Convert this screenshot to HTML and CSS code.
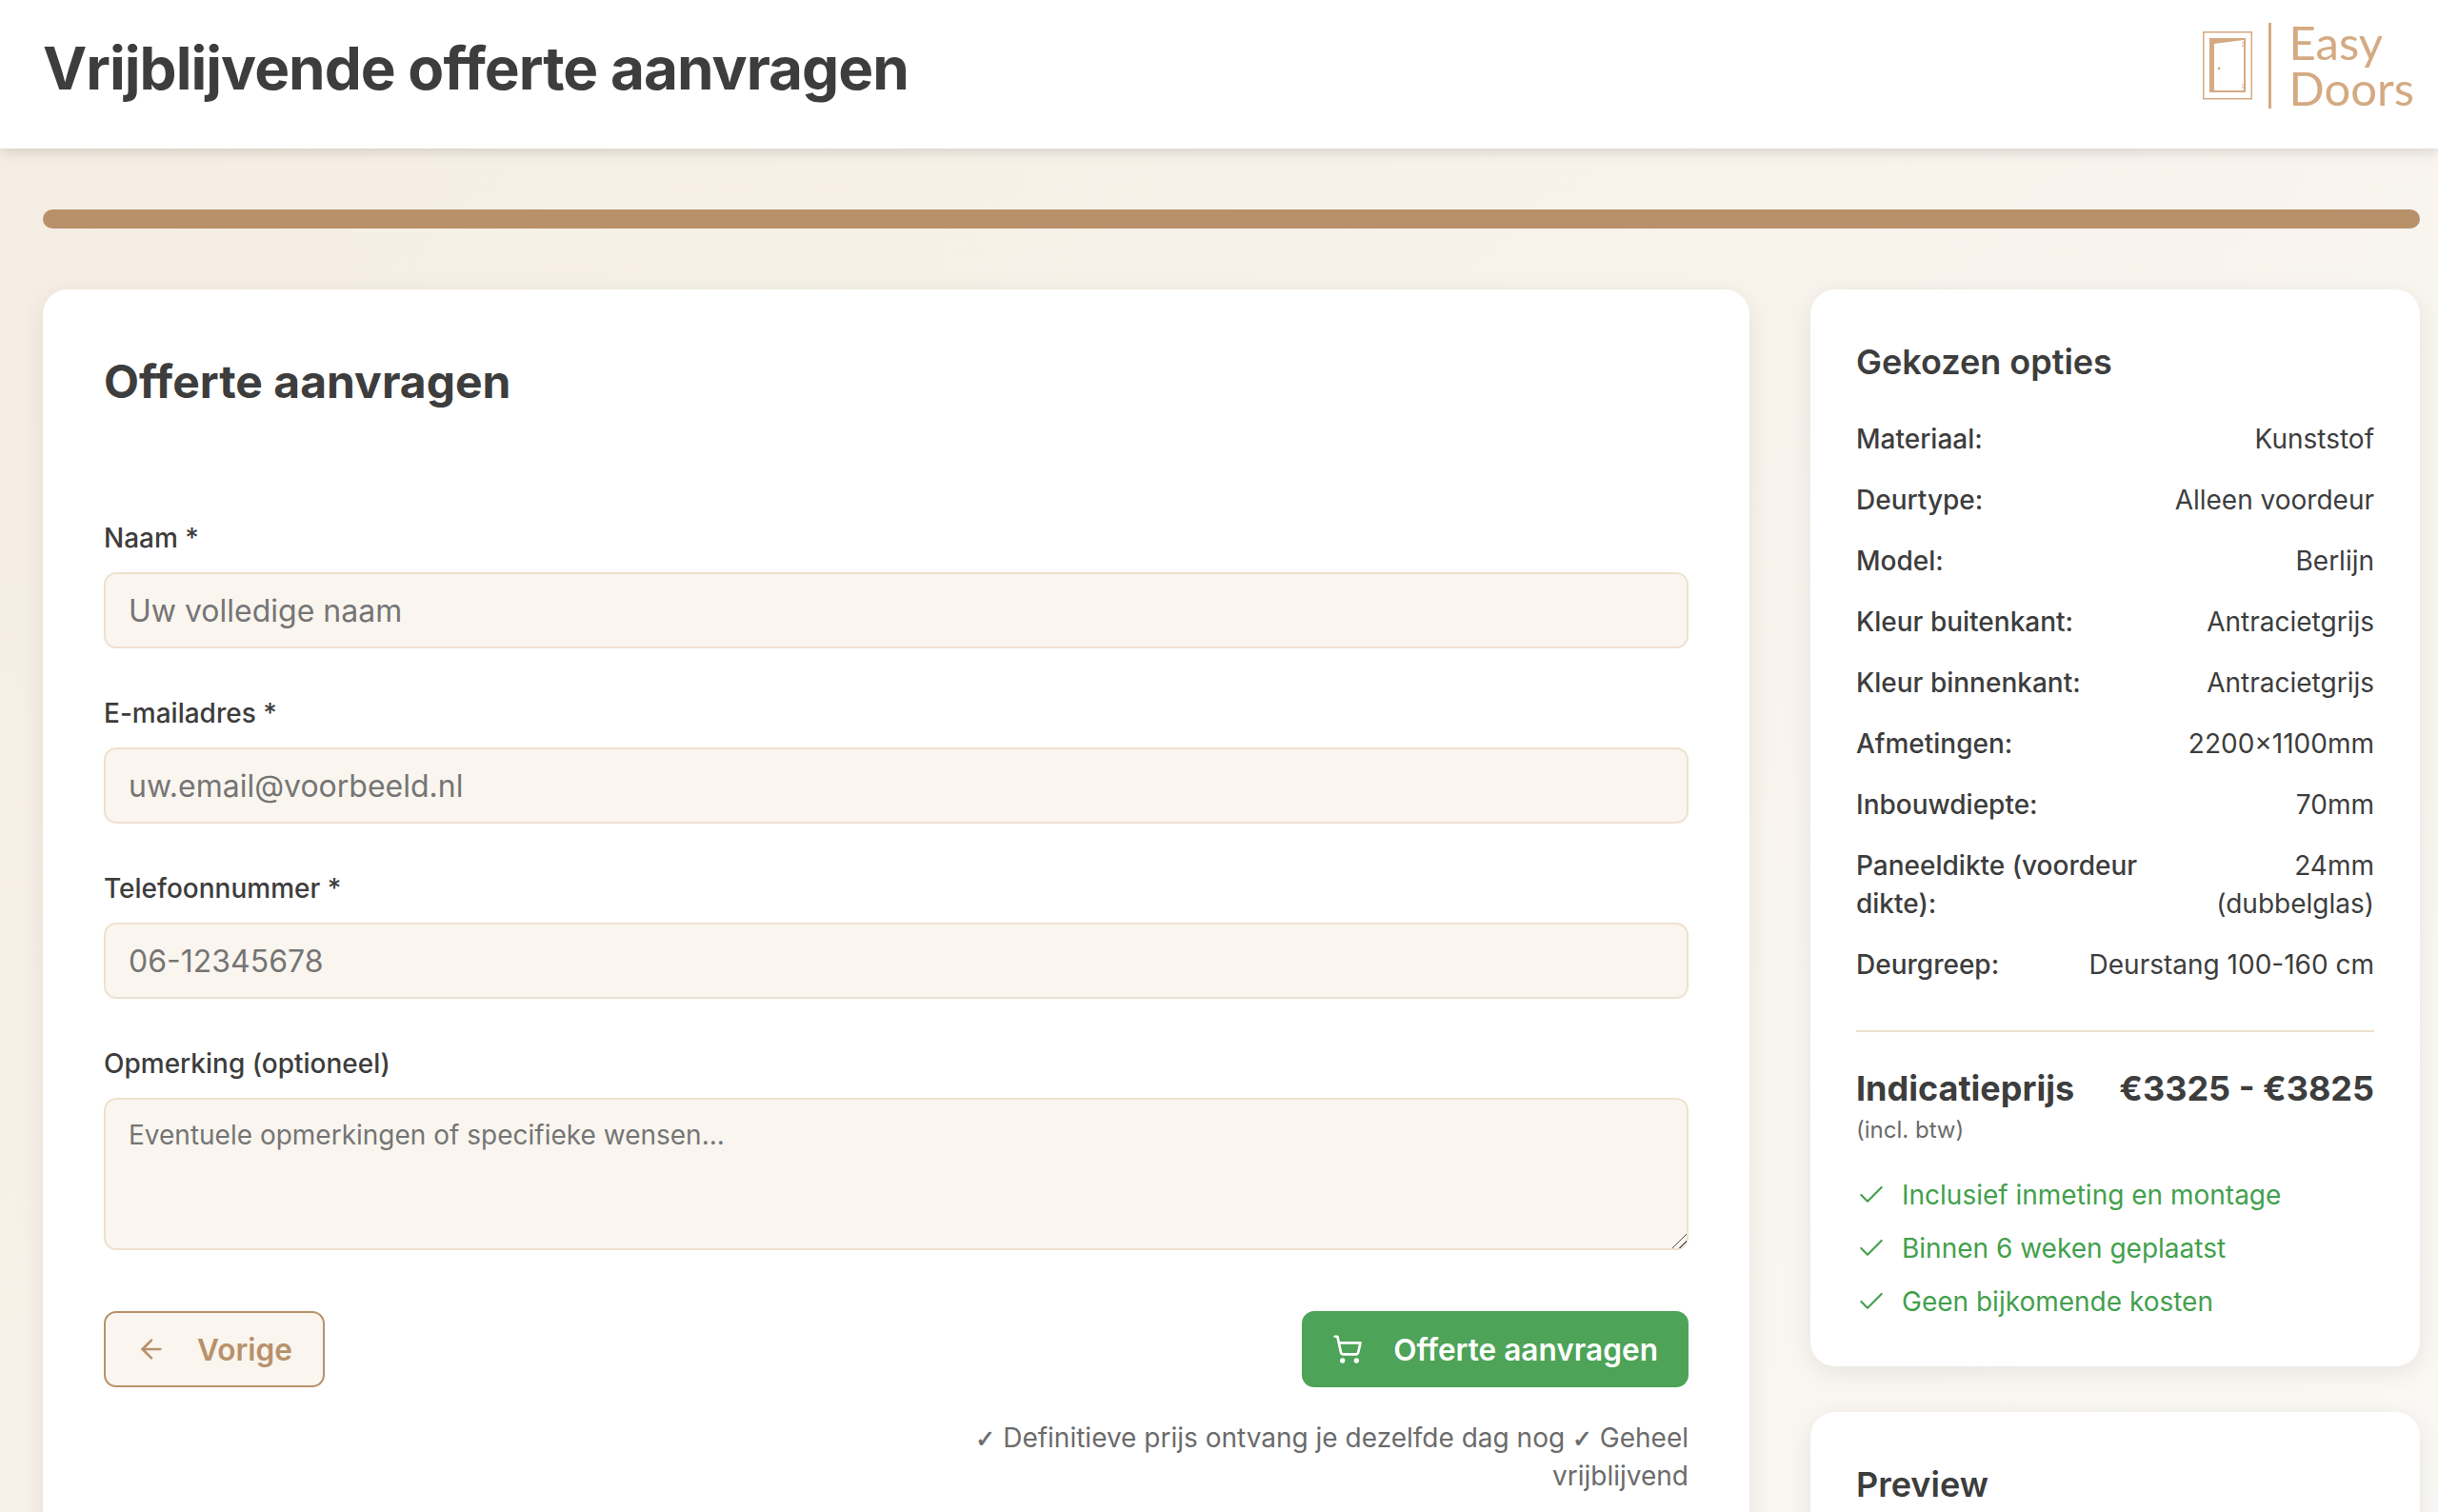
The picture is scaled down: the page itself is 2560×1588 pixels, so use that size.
FILE: index.html
```html
<!DOCTYPE html>
<html lang="nl">
<head>
<meta charset="utf-8">
<title>Vrijblijvende offerte aanvragen</title>
<link rel="stylesheet" href="styles.css">
</head>
<body>
<header class="topbar">
  <h1 class="page-title">Vrijblijvende offerte aanvragen</h1>
  <div class="logo">
    <svg class="logo-door" viewBox="0 0 52 72" aria-hidden="true">
      <rect x="0.75" y="0.75" width="50.5" height="70" fill="none" stroke="#d4aa82" stroke-width="1.5"/>
      <path d="M7 7H45V64H7Z M12 13V62H43V9Z" fill="#d4aa82" fill-rule="evenodd"/>
      <circle cx="17" cy="39" r="1.4" fill="#d4aa82"/>
      <path d="M41 12h2M41 15h2M41 56h2M41 59h2" stroke="#d4aa82" stroke-width="1"/>
    </svg>
    <span class="logo-rule"></span>
    <span class="logo-text">Easy<br>Doors</span>
  </div>
</header>
<main class="page">
  <div class="progress"></div>
  <div class="columns">
    <section class="card form-card">
      <h2 class="form-title">Offerte aanvragen</h2>
      <form class="form">
        <div class="field">
          <label class="field-label">Naam *</label>
          <input class="control" type="text" placeholder="Uw volledige naam">
        </div>
        <div class="field">
          <label class="field-label">E-mailadres *</label>
          <input class="control" type="email" placeholder="uw.email@voorbeeld.nl">
        </div>
        <div class="field">
          <label class="field-label">Telefoonnummer *</label>
          <input class="control" type="tel" placeholder="06-12345678">
        </div>
        <div class="field">
          <label class="field-label">Opmerking (optioneel)</label>
          <textarea class="control area" rows="3" placeholder="Eventuele opmerkingen of specifieke wensen..."></textarea>
        </div>
        <div class="actions">
          <button type="button" class="btn btn-back">
            <svg class="btn-icon" viewBox="0 0 24 24" fill="none" stroke="currentColor" stroke-width="2" stroke-linecap="round" stroke-linejoin="round"><path d="m12 19-7-7 7-7"/><path d="M19 12H5"/></svg>
            Vorige
          </button>
          <button type="button" class="btn btn-submit">
            <svg class="btn-icon" viewBox="0 0 24 24" fill="none" stroke="currentColor" stroke-width="2" stroke-linecap="round" stroke-linejoin="round"><circle cx="8" cy="21" r="1"/><circle cx="19" cy="21" r="1"/><path d="M2.05 2.05h2l2.66 12.42a2 2 0 0 0 2 1.58h9.78a2 2 0 0 0 1.95-1.57l1.65-7.43H5.12"/></svg>
            Offerte aanvragen
          </button>
        </div>
        <p class="note"><span class="tick">✓</span> Definitieve prijs ontvang je dezelfde dag nog <span class="tick">✓</span> Geheel vrijblijvend</p>
      </form>
    </section>
    <aside class="sidebar">
      <section class="card side-card">
        <h3 class="side-title">Gekozen opties</h3>
        <dl class="options">
          <div class="option"><dt>Materiaal:</dt><dd>Kunststof</dd></div>
          <div class="option"><dt>Deurtype:</dt><dd>Alleen voordeur</dd></div>
          <div class="option"><dt>Model:</dt><dd>Berlijn</dd></div>
          <div class="option"><dt>Kleur buitenkant:</dt><dd>Antracietgrijs</dd></div>
          <div class="option"><dt>Kleur binnenkant:</dt><dd>Antracietgrijs</dd></div>
          <div class="option"><dt>Afmetingen:</dt><dd>2200×1100mm</dd></div>
          <div class="option"><dt>Inbouwdiepte:</dt><dd>70mm</dd></div>
          <div class="option"><dt>Paneeldikte (voordeur dikte):</dt><dd>24mm (dubbelglas)</dd></div>
          <div class="option"><dt>Deurgreep:</dt><dd>Deurstang 100-160 cm</dd></div>
        </dl>
        <div class="price-block">
          <div class="price-row"><span>Indicatieprijs</span><span>€3325 - €3825</span></div>
          <div class="price-sub">(incl. btw)</div>
          <ul class="perks">
            <li class="perk"><svg class="perk-icon" viewBox="0 0 24 24" fill="none" stroke="currentColor" stroke-linecap="round" stroke-linejoin="round"><path d="M20 6 9 17l-5-5"/></svg>Inclusief inmeting en montage</li>
            <li class="perk"><svg class="perk-icon" viewBox="0 0 24 24" fill="none" stroke="currentColor" stroke-linecap="round" stroke-linejoin="round"><path d="M20 6 9 17l-5-5"/></svg>Binnen 6 weken geplaatst</li>
            <li class="perk"><svg class="perk-icon" viewBox="0 0 24 24" fill="none" stroke="currentColor" stroke-linecap="round" stroke-linejoin="round"><path d="M20 6 9 17l-5-5"/></svg>Geen bijkomende kosten</li>
          </ul>
        </div>
      </section>
      <section class="card side-card preview-card">
        <h3 class="side-title">Preview</h3>
      </section>
    </aside>
  </div>
</main>
</body>
</html>
```
FILE: styles.css
```css
* { box-sizing: border-box; }
html, body { margin: 0; height: 1588px; overflow: hidden; }
body {
  font-family: Inter, "Noto Sans", sans-serif;
  color: #3d3d3d;
  background: linear-gradient(135deg, #f5ede2 0%, #faf8f4 100%);
  font-size: 28px;
}
.topbar {
  position: relative;
  height: 156px;
  background: #fff;
  box-shadow: 0 3px 13px rgba(0, 0, 0, 0.14);
  display: flex;
  align-items: center;
  justify-content: space-between;
  padding: 0 25px 12px 45px;
}
.page-title { margin: 0; font-size: 62px; font-weight: 700; line-height: 1.1; letter-spacing: -1px; }
.logo { display: flex; align-items: center; color: #d4aa82; margin-top: -6px; }
.logo-door { width: 52px; height: 72px; }
.logo-rule { width: 3px; height: 90px; background: #d4aa82; margin: 0 19px 0 17px; }
.logo-text { font-family: Lato, sans-serif; font-weight: 400; font-size: 49px; line-height: 48px; margin-top: -3px; }
.page { padding: 64px 19px 0 45px; }
.progress { height: 20px; border-radius: 10px; background: #b8916b; }
.columns { display: flex; gap: 64px; margin-top: 64px; align-items: flex-start; }
.card { background: #fff; border-radius: 26px; box-shadow: 0 6px 26px rgba(0, 0, 0, 0.08); }
.form-card { width: 1792px; padding: 64px 64px 100px; }
.form-title { margin: 0 0 111px; font-size: 48px; font-weight: 700; line-height: 66px; }
.field { margin-bottom: 48px; }
.field-label { display: block; font-size: 28px; font-weight: 500; line-height: 40px; margin-bottom: 16px; }
.control {
  display: block;
  width: 100%;
  height: 80px;
  padding: 0 24px;
  border: 2px solid #efe0cf;
  border-radius: 13px;
  background: #faf5ef;
  font-family: inherit;
  font-size: 32px;
  color: #3d3d3d;
  outline: none;
}
.area { height: 160px; padding: 20px 24px; font-size: 28px; resize: vertical; }
.area::-webkit-resizer {
  background:
    linear-gradient(135deg, transparent 73%, #666 73%, #666 79%, transparent 79%),
    linear-gradient(135deg, transparent 47%, #555 47%, #555 53%, transparent 53%);
}
.actions { display: flex; justify-content: space-between; margin-top: 64px; }
.btn {
  display: flex;
  align-items: center;
  gap: 32px;
  height: 80px;
  padding: 0 32px;
  border-radius: 13px;
  font-family: inherit;
  font-size: 31.6px;
  font-weight: 600;
}
.btn-icon { width: 32px; height: 32px; flex: none; }
.btn-back { border: 2px solid #b8916b; background: #faf5ef; color: #b8916b; }
.btn-submit { border: 0; background: #4da358; color: #fff; }
.note { margin: 33px 0 0 auto; width: 768px; text-align: right; font-size: 28px; line-height: 40px; color: #6b6b6b; }
.tick { font-family: "DejaVu Sans", sans-serif; font-size: 25px; line-height: 1; -webkit-text-stroke: 0.7px #6b6b6b; }
.sidebar { width: 640px; flex: none; display: flex; flex-direction: column; gap: 48px; }
.side-card { padding: 48px; }
.side-title { margin: 0 0 33px; font-size: 36px; font-weight: 600; line-height: 56px; }
.options { margin: 0; }
.option { display: flex; justify-content: space-between; gap: 16px; margin-bottom: 24px; font-size: 28px; line-height: 40px; }
.option dt { font-weight: 500; }
.option dd { margin: 0; text-align: right; }
.price-block { border-top: 2px solid #efe0cf; margin-top: 49px; padding-top: 34px; }
.price-row { display: flex; justify-content: space-between; font-size: 36px; font-weight: 700; line-height: 50px; }
.price-sub { font-size: 24px; line-height: 36px; color: #6b6b6b; margin-top: 1px; }
.perks { list-style: none; margin: 30px 0 0; padding: 0; }
.perk { display: flex; align-items: center; gap: 16px; font-size: 28px; line-height: 40px; color: #43a04d; margin-bottom: 16px; }
.perk:last-child { margin-bottom: 0; }
.perk-icon { width: 32px; height: 32px; flex: none; stroke-width: 1.6; }
.preview-card { height: 600px; }
```
